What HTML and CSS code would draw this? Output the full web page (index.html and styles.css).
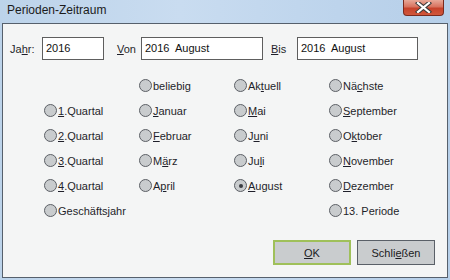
FILE: index.html
```html
<!DOCTYPE html>
<html lang="de">
<head>
    <meta charset="UTF-8">
    <title>Perioden-Zeitraum</title>
    <link rel="stylesheet" href="styles.css">
</head>
<body>
    <div class="window">
        <div class="titlebar">
            <span class="title">Perioden-Zeitraum</span>
            <div class="close-btn">
                <svg width="17" height="11" viewBox="0 0 17 11">
                    <path d="M3 1 L14 10 M14 1 L3 10" stroke="#3b3b3b" stroke-width="4.2" stroke-linecap="square"/>
                    <path d="M3 1 L14 10 M14 1 L3 10" stroke="#ffffff" stroke-width="2.2" stroke-linecap="square"/>
                </svg>
            </div>
        </div>

        <div class="client">
            <div class="fields">
                <label class="lbl lbl-jahr">Ja<u>h</u>r:</label>
                <div class="input input-jahr">2016</div>
                <label class="lbl lbl-von"><u>V</u>on</label>
                <div class="input input-von">2016&nbsp; August</div>
                <label class="lbl lbl-bis"><u>B</u>is</label>
                <div class="input input-bis">2016&nbsp; August</div>
            </div>

            <div class="radios">
                <div class="cell"></div>
                <div class="cell"><span class="radio"></span>beliebig</div>
                <div class="cell"><span class="radio"></span>Ak<u>t</u>uell</div>
                <div class="cell"><span class="radio"></span>Nä<u>c</u>hste</div>

                <div class="cell"><span class="radio"></span><u>1</u>.Quartal</div>
                <div class="cell"><span class="radio"></span><u>J</u>anuar</div>
                <div class="cell"><span class="radio"></span><u>M</u>ai</div>
                <div class="cell"><span class="radio"></span><u>S</u>eptember</div>

                <div class="cell"><span class="radio"></span><u>2</u>.Quartal</div>
                <div class="cell"><span class="radio"></span><u>F</u>ebruar</div>
                <div class="cell"><span class="radio"></span>J<u>u</u>ni</div>
                <div class="cell"><span class="radio"></span>O<u>k</u>tober</div>

                <div class="cell"><span class="radio"></span><u>3</u>.Quartal</div>
                <div class="cell"><span class="radio"></span>M<u>ä</u>rz</div>
                <div class="cell"><span class="radio"></span>Ju<u>l</u>i</div>
                <div class="cell"><span class="radio"></span><u>N</u>ovember</div>

                <div class="cell"><span class="radio"></span><u>4</u>.Quartal</div>
                <div class="cell"><span class="radio"></span>A<u>p</u>ril</div>
                <div class="cell"><span class="radio checked"></span><u>A</u>ugust</div>
                <div class="cell"><span class="radio"></span><u>D</u>ezember</div>

                <div class="cell"><span class="radio"></span>Geschäftsjahr</div>
                <div class="cell"></div>
                <div class="cell"></div>
                <div class="cell"><span class="radio"></span>13. Periode</div>
            </div>

            <div class="buttons">
                <div class="btn btn-default"><u>O</u>K</div>
                <div class="btn">Schli<u>e</u>ßen</div>
            </div>
        </div>
    </div>
</body>
</html>
```

FILE: styles.css
```css
body {
    margin: 0;
    font-family: "Liberation Sans", Arial, sans-serif;
    font-size: 11px;
    color: #1f1f2a;
}

.window {
    width: 450px;
    height: 280px;
    box-sizing: border-box;
    padding: 0 2px 2px 2px;
    background: linear-gradient(90deg, #bcd3ea 0%, #c9dcf0 40%, #bdd4ec 75%, #b6cfe9 100%);
}

.titlebar {
    height: 23px;
    display: flex;
    align-items: flex-start;
    justify-content: space-between;
}

.title {
    font-size: 12px;
    color: #1b1b1b;
    margin: 3px 0 0 5px;
}

.close-btn {
    width: 41px;
    height: 16px;
    margin-right: 4px;
    box-sizing: border-box;
    border: 1px solid #7a2a1e;
    border-top: none;
    border-radius: 0 0 4px 4px;
    background: linear-gradient(180deg, #e8a898 0%, #d8735f 45%, #c7422b 55%, #d0573c 100%);
    display: flex;
    justify-content: center;
    align-items: center;
}

.client {
    height: 255px;
    box-sizing: border-box;
    border: 1px solid #56606c;
    background: #f4f5f5;
}

.fields {
    display: flex;
    align-items: center;
    margin-top: 13px;
    height: 23px;
}

.lbl {
    display: block;
}

.lbl-jahr {
    margin-left: 7px;
    width: 32px;
}

.lbl-von {
    margin-left: 13px;
    width: 24px;
}

.lbl-bis {
    margin-left: 8px;
    width: 26px;
}

.input {
    height: 23px;
    box-sizing: border-box;
    border: 1px solid #5e5e5e;
    background: #ffffff;
    padding: 0 3px;
    line-height: 21px;
    color: #111;
}

.input-jahr {
    width: 62px;
}

.input-von {
    width: 122px;
}

.input-bis {
    width: 121px;
}

.radios {
    display: grid;
    grid-template-columns: 95px 95px 95px 95px;
    grid-auto-rows: 25px;
    margin-top: 13px;
    padding-left: 41px;
}

.cell {
    display: flex;
    align-items: center;
    white-space: nowrap;
}

.radio {
    width: 13px;
    height: 13px;
    box-sizing: border-box;
    border: 1px solid #5c6066;
    border-radius: 50%;
    background: #c9ccce;
    margin-right: 1px;
    position: relative;
    flex-shrink: 0;
}

.radio.checked::after {
    content: '';
    position: absolute;
    left: 3.5px;
    top: 3.5px;
    width: 4px;
    height: 4px;
    border-radius: 50%;
    background: #3a3d42;
}

.buttons {
    display: flex;
    justify-content: flex-end;
    gap: 6px;
    margin-top: 17px;
    padding-right: 12px;
}

.btn {
    width: 78px;
    height: 25px;
    box-sizing: border-box;
    border: 1px solid #5a6068;
    background: #c9ccce;
    display: flex;
    justify-content: center;
    align-items: center;
    color: #1b1b22;
}

.btn-default {
    border: 2px solid #9fc05a;
}
```
